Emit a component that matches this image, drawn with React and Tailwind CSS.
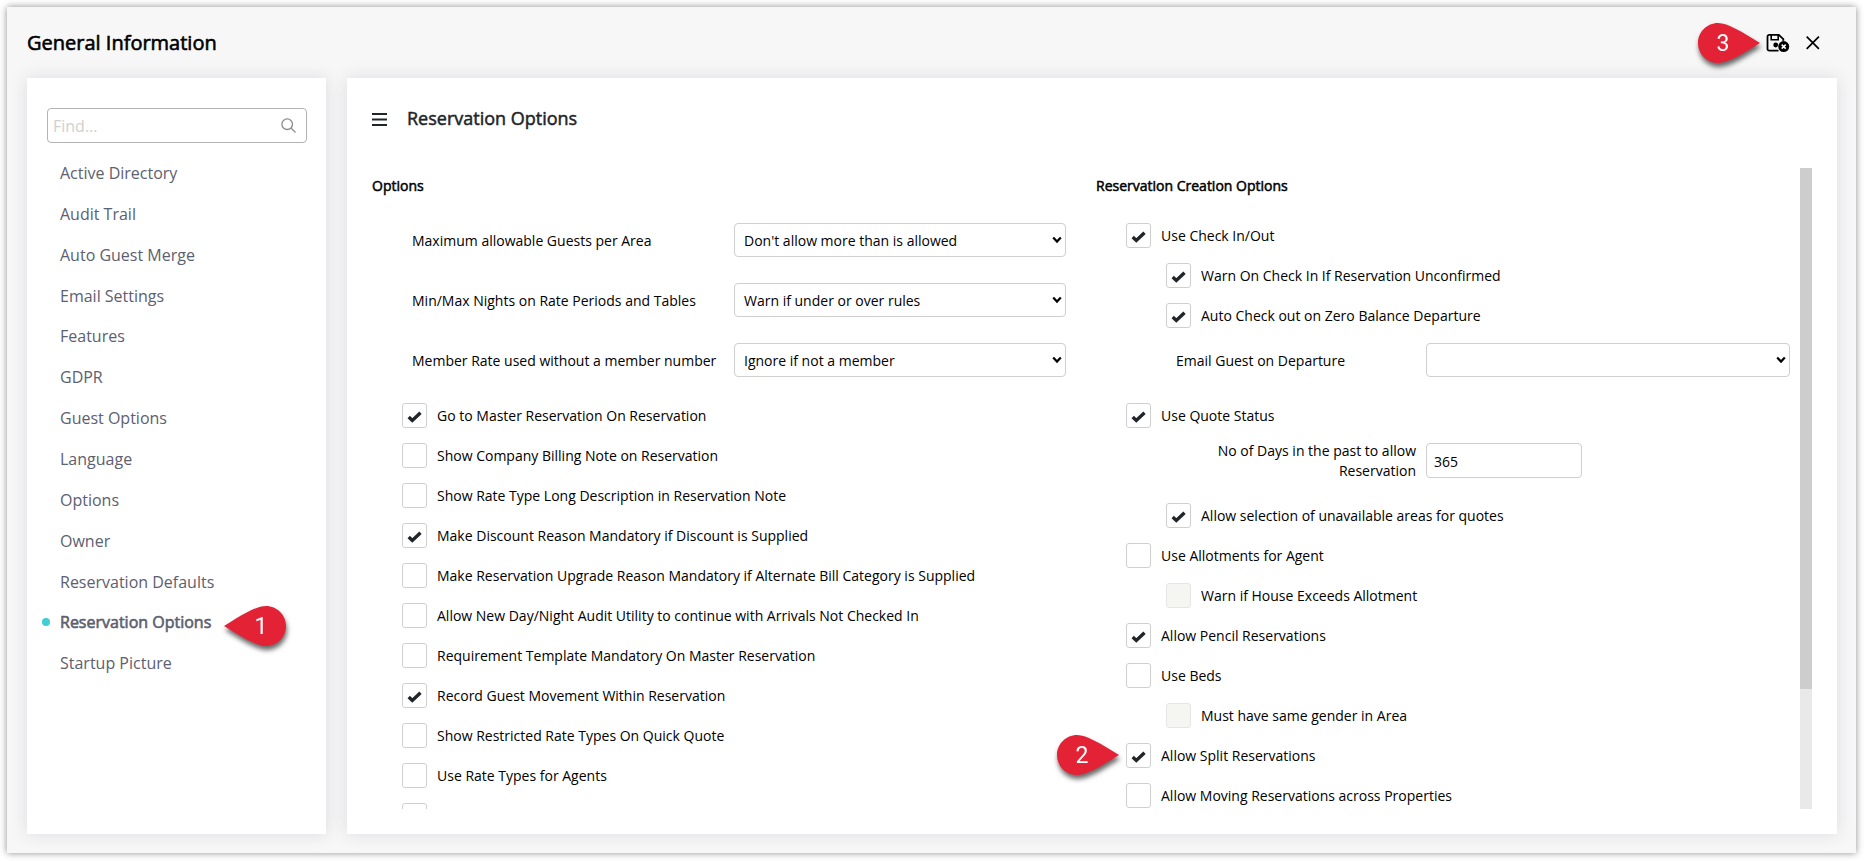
import React from 'react';

const menu = [
  'Active Directory', 'Audit Trail', 'Auto Guest Merge', 'Email Settings', 'Features', 'GDPR', 'Guest Options',
  'Language', 'Options', 'Owner', 'Reservation Defaults', 'Reservation Options', 'Startup Picture',
];

const selects = [
  ['Maximum allowable Guests per Area', "Don't allow more than is allowed"],
  ['Min/Max Nights on Rate Periods and Tables', 'Warn if under or over rules'],
  ['Member Rate used without a member number', 'Ignore if not a member'],
];

const leftChecks = [
  ['Go to Master Reservation On Reservation', true],
  ['Show Company Billing Note on Reservation', false],
  ['Show Rate Type Long Description in Reservation Note', false],
  ['Make Discount Reason Mandatory if Discount is Supplied', true],
  ['Make Reservation Upgrade Reason Mandatory if Alternate Bill Category is Supplied', false],
  ['Allow New Day/Night Audit Utility to continue with Arrivals Not Checked In', false],
  ['Requirement Template Mandatory On Master Reservation', false],
  ['Record Guest Movement Within Reservation', true],
  ['Show Restricted Rate Types On Quick Quote', false],
  ['Use Rate Types for Agents', false],
  ['', false],
];

function Check({ label, checked, indent, disabled }) {
  return (
    <label className={`flex h-10 items-start ${indent ? 'pl-10' : ''}`}>
      <span
        className={`flex size-[25px] shrink-0 items-center justify-center rounded-[3px] border ${
          disabled ? 'border-[#e6e7e2] bg-[#f5f6f1]' : 'border-[#cfcfcf] bg-white'
        }`}
      >
        {checked && (
          <svg width="15" height="12" viewBox="0 0 15 12" className="mt-[2px] mr-px">
            <path d="M1.7 6 5.3 9.4 13.5 1.7" fill="none" stroke="#212529" strokeWidth="3.400" />
          </svg>
        )}
      </span>
      <span className="ml-[10px] leading-[25px] whitespace-nowrap">{label}</span>
    </label>
  );
}

function Select({ value, className }) {
  return (
    <div className={`flex h-[34px] items-center justify-between rounded-[4px] border border-[#cfcfcf] bg-white pr-[3px] pl-[9px] ${className}`}>
      <span className="pt-px">{value}</span>
      <svg width="10" height="8" viewBox="0 0 10 8">
        <path d="M1.2 1.6 5 5.6 8.8 1.6" fill="none" stroke="#000" strokeWidth="2.200" />
      </svg>
    </div>
  );
}

function Marker({ n, flip, className }) {
  return (
    <div className={`absolute h-10 w-[62px] drop-shadow-[1px_4px_2.5px_rgba(0,0,0,0.6)] ${className}`}>
      <svg width="62" height="40" viewBox="0 0 62 40" className={flip ? '-scale-x-100' : ''}>
        <path d="M20 0C9 0 0 9 0 20s9 20 20 20c10 0 24-9 42-20C44 9 30 0 20 0Z" fill="#e32236" />
      </svg>
      <span
        className={`absolute top-0 w-10 text-center font-[Roboto,sans-serif] text-[23px] leading-[41px] text-white ${
          flip ? 'left-[17px]' : 'left-[5px]'
        }`}
      >
        {n}
      </span>
    </div>
  );
}

export default function App() {
  return (
    <div className="h-[861px] w-[1864px] overflow-hidden bg-white p-[7px] pb-2 font-['Open_Sans',sans-serif] text-[14px] text-black">
      <div className="relative flex h-[846px] w-[1849px] flex-col bg-[#f7f7f7] px-5 pr-[19px] pb-[19px] shadow-[0_0_7px_rgba(0,0,0,0.45)]">
        <header className="flex h-[71px] items-center justify-between pr-[17px]">
          <h1 className="text-[20px] leading-7 [-webkit-text-stroke:0.6px_#000]">General Information</h1>
          <div className="flex items-center gap-4">
            <svg width="24" height="20" viewBox="0 0 24 20">
              <path d="M12.500 17.600H3.200A1.700 1.700 0 0 1 1.500 15.900V3.500A1.700 1.700 0 0 1 3.200 1.800H12.800L17.300 6.200V8.500" fill="none" stroke="#000" strokeWidth="1.800" />
              <path d="M5.200 2v4.800h7V2" fill="none" stroke="#000" strokeWidth="1.600" />
              <circle cx="9.700" cy="12" r="2.400" />
              <circle cx="17.700" cy="13.600" r="5.900" fill="#f7f7f7" />
              <circle cx="17.700" cy="13.600" r="5.500" />
              <path d="m15.700 11.600 4 4m0-4-4 4" stroke="#fff" strokeWidth="1.500" />
            </svg>
            <svg width="14" height="14" viewBox="0 0 14 14">
              <path d="m0.700 0.700 12.200 12.200M12.900 0.700 0.700 12.900" stroke="#000" strokeWidth="1.700" />
            </svg>
          </div>
        </header>
        <div className="flex h-[756px] gap-[21px]">
          <aside className="w-[299px] bg-white pt-[30px] pr-[19px] pl-5 shadow-[0_0_16px_rgba(40,40,80,0.13)]">
            <div className="flex h-[35px] items-center justify-between rounded-[4px] border border-[#b3b3b3] pr-[10px] pl-[5px]">
              <span className="pt-px text-[16px] text-[#d0d0d0]">Find...</span>
              <svg width="15" height="15" viewBox="0 0 15 15" fill="none" stroke="#8c8c8c" strokeWidth="1.300">
                <circle cx="6.200" cy="6.200" r="5.300" />
                <path d="m10 10 4.500 4.500" />
              </svg>
            </div>
            <nav className="mt-[10.100px]">
              {menu.map((m) => {
                const active = m === 'Reservation Options';
                return (
                  <div key={m} className="flex h-[40.850px] items-start pt-2 text-[16px] leading-6 text-[#5c6070]">
                    <span className={`mt-2 -ml-[5px] size-2 rounded-full ${active ? 'bg-[#40cdd3]' : ''}`} />
                    <span className={`ml-[10px] ${active ? '[-webkit-text-stroke:0.6px_#5c6070]' : ''}`}>{m}</span>
                  </div>
                );
              })}
            </nav>
          </aside>
          <main className="w-[1490px] bg-white pr-[25px] pl-[25px] shadow-[0_0_16px_rgba(40,40,80,0.13)]">
            <div className="flex h-[90px] items-center pb-2">
              <svg width="15" height="13" viewBox="0 0 15 13">
                <path d="M0 1h15M0 6.500h15M0 12h15" stroke="#212529" strokeWidth="2" />
              </svg>
              <h2 className="mb-[2px] ml-5 text-[18px] text-[#212529] [-webkit-text-stroke:0.5px_#212529]">Reservation Options</h2>
            </div>
            <div className="flex h-[641px] overflow-hidden">
              <section className="w-[724px]">
                <h3 className="mt-2 h-[47px] leading-5 [-webkit-text-stroke:0.5px_#000]">Options</h3>
                {selects.map(([label, value]) => (
                  <div key={label} className="flex h-[60px] items-start pl-10">
                    <span className="w-[322px] leading-[35px] whitespace-nowrap">{label}</span>
                    <Select value={value} className="w-[332px]" />
                  </div>
                ))}
                <div className="pl-[30px]">
                  {leftChecks.map(([label, checked]) => (
                    <Check key={label} label={label} checked={checked} />
                  ))}
                </div>
              </section>
              <section className="w-[704px]">
                <h3 className="mt-2 h-[47px] leading-5 [-webkit-text-stroke:0.5px_#000]">Reservation Creation Options</h3>
                <div className="pl-[30px]">
                  <Check label="Use Check In/Out" checked />
                  <Check label="Warn On Check In If Reservation Unconfirmed" checked indent />
                  <Check label="Auto Check out on Zero Balance Departure" checked indent />
                  <div className="flex h-[60px] items-start pl-[50px]">
                    <span className="w-[250px] leading-[35px]">Email Guest on Departure</span>
                    <Select value="" className="w-[364px]" />
                  </div>
                  <Check label="Use Quote Status" checked />
                  <div className="flex h-[60px] items-start">
                    <span className="mt-[-2px] w-[290px] pl-20 text-right leading-5">No of Days in the past to allow Reservation</span>
                    <div className="ml-[10px] h-[35px] w-[156px] rounded-[4px] border border-[#cfcfcf] pl-[7px] leading-[35px]">365</div>
                  </div>
                  <Check label="Allow selection of unavailable areas for quotes" checked indent />
                  <Check label="Use Allotments for Agent" />
                  <Check label="Warn if House Exceeds Allotment" indent disabled />
                  <Check label="Allow Pencil Reservations" checked />
                  <Check label="Use Beds" />
                  <Check label="Must have same gender in Area" indent disabled />
                  <Check label="Allow Split Reservations" checked />
                  <Check label="Allow Moving Reservations across Properties" />
                </div>
              </section>
              <div className="h-full w-3 bg-[#e9e9e9]">
                <div className="h-[521px] bg-[#cdcdcd]" />
              </div>
            </div>
          </main>
        </div>
        <Marker n="1" flip className="top-[599px] left-[217px]" />
        <Marker n="2" className="top-[728px] left-[1050px]" />
        <Marker n="3" className="top-4 left-[1691px]" />
      </div>
    </div>
  );
}
